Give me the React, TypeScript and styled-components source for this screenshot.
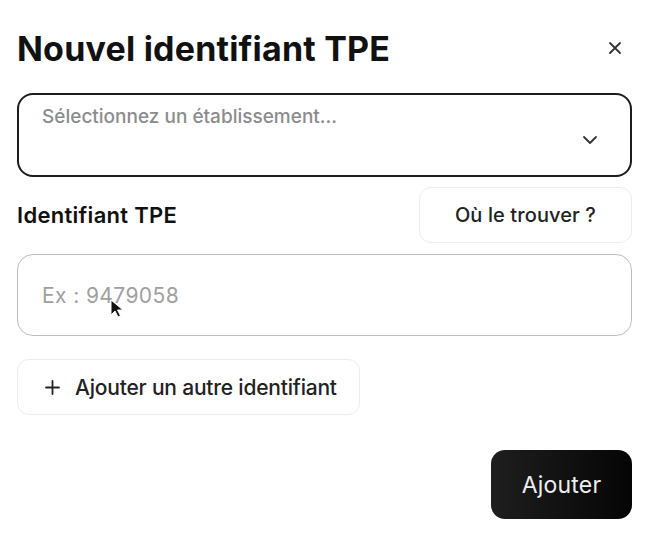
import React from "react";
import styled, { createGlobalStyle } from "styled-components";

const GlobalStyle = createGlobalStyle`
    html, body {
        margin: 0;
        padding: 0;
        background: #ffffff;
    }
    body {
        font-family: Inter, "Noto Sans", sans-serif;
        color: #111;
    }
`;

const Modal = styled.div`
    width: 658px;
    height: 536px;
    box-sizing: border-box;
    padding: 28px 26px 0 17px;
    display: flex;
    flex-direction: column;
`;

const Header = styled.div`
    display: flex;
    align-items: center;
    justify-content: space-between;
    height: 40px;
`;

const Title = styled.h1`
    margin: 0;
    font-size: 34px;
    font-weight: 700;
    letter-spacing: 0.2px;
    color: #111;
`;

const CloseBtn = styled.button`
    width: 24px;
    height: 24px;
    padding: 0;
    margin-right: 5px;
    border: none;
    background: none;
    display: flex;
    align-items: center;
    justify-content: center;
    color: #333;
    cursor: pointer;
`;

const Select = styled.div`
    margin-top: 25px;
    height: 84px;
    box-sizing: border-box;
    border: 2px solid #1d1d1d;
    border-radius: 16px;
    display: flex;
    justify-content: space-between;
    padding: 10px 32px 0 23px;
`;

const SelectText = styled.span`
    font-size: 19px;
    font-weight: 500;
    color: #8c8c8c;
`;

const Chevron = styled.span`
    margin-top: 24px;
    color: #333;
`;

const LabelRow = styled.div`
    margin-top: 10px;
    display: flex;
    align-items: center;
    justify-content: space-between;
`;

const Label = styled.span`
    font-size: 22px;
    font-weight: 600;
    letter-spacing: 0.3px;
    color: #111;
`;

const GhostButton = styled.button<{ $wide?: boolean }>`
    height: 56px;
    box-sizing: border-box;
    padding: ${(p) => (p.$wide ? "0 22px 0 27px" : "0 35px")};
    border: 1px solid #ececec;
    border-radius: 12px;
    background: #fff;
    display: flex;
    align-items: center;
    gap: 15px;
    font-family: Inter, "Noto Sans", sans-serif;
    font-size: ${(p) => (p.$wide ? "21px" : "20px")};
    font-weight: 500;
    letter-spacing: ${(p) => (p.$wide ? "-0.2px" : "0.1px")};
    color: #222;
    cursor: pointer;
`;

const FieldWrap = styled.div`
    position: relative;
    margin-top: 11px;
`;

const Input = styled.input`
    width: 100%;
    height: 82px;
    box-sizing: border-box;
    border: 1.5px solid #bdbdbd;
    border-radius: 16px;
    padding: 0 24px;
    font-family: Inter, "Noto Sans", sans-serif;
    font-size: 21px;
    letter-spacing: 0.4px;
    color: #111;
    outline: none;
    &::placeholder {
        color: #a0a0a0;
    }
`;

const Cursor = styled.svg`
    position: absolute;
    left: 93px;
    top: 45px;
`;

const AddRow = styled.div`
    margin-top: 23px;
    display: flex;
`;

const Footer = styled.div`
    margin-top: 35px;
    display: flex;
    justify-content: flex-end;
`;

const PrimaryButton = styled.button`
    width: 141px;
    height: 69px;
    border: none;
    border-radius: 14px;
    background: linear-gradient(90deg, #1e1e1e 0%, #050505 100%);
    color: #eeeeee;
    font-family: Inter, "Noto Sans", sans-serif;
    font-size: 23px;
    letter-spacing: 0.2px;
    cursor: pointer;
`;

const App: React.FC = () => {
    return (
        <>
            <GlobalStyle />
            <Modal>
                <Header>
                    <Title>Nouvel identifiant TPE</Title>
                    <CloseBtn aria-label="Fermer">
                        <svg width="14" height="14" viewBox="0 0 14 14" fill="none" stroke="currentColor" strokeWidth="1.8" strokeLinecap="round">
                            <path d="M2 2l10 10M12 2L2 12" />
                        </svg>
                    </CloseBtn>
                </Header>
                <Select>
                    <SelectText>Sélectionnez un établissement...</SelectText>
                    <Chevron>
                        <svg width="16" height="10" viewBox="0 0 16 10" fill="none" stroke="currentColor" strokeWidth="1.8" strokeLinecap="round" strokeLinejoin="round">
                            <path d="M2 2l6 6 6-6" />
                        </svg>
                    </Chevron>
                </Select>
                <LabelRow>
                    <Label>Identifiant TPE</Label>
                    <GhostButton>Où le trouver ?</GhostButton>
                </LabelRow>
                <FieldWrap>
                    <Input placeholder="Ex : 9479058" />
                    <Cursor width="14" height="20" viewBox="0 0 14 20">
                        <path d="M1 1v15l4-4 3 6 2.5-1.2-3-5.8h5.5z" fill="#111" stroke="#fff" strokeWidth="1" />
                    </Cursor>
                </FieldWrap>
                <AddRow>
                    <GhostButton $wide>
                        <svg width="15" height="15" viewBox="0 0 15 15" fill="none" stroke="currentColor" strokeWidth="1.8" strokeLinecap="round">
                            <path d="M7.5 1v13M1 7.5h13" />
                        </svg>
                        Ajouter un autre identifiant
                    </GhostButton>
                </AddRow>
                <Footer>
                    <PrimaryButton>Ajouter</PrimaryButton>
                </Footer>
            </Modal>
        </>
    );
};

export default App;
